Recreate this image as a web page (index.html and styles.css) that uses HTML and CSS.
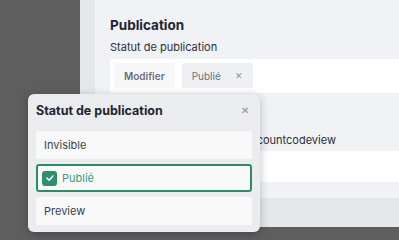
FILE: index.html
```html
<!DOCTYPE html>
<html lang="fr">
<head>
    <meta charset="UTF-8">
    <title>Publication</title>
    <link rel="stylesheet" href="styles.css">
</head>
<body>
    <div class="screen">
        <div class="panel">
            <div class="content">
                <h2 class="section-title">Publication</h2>
                <div class="field-label">Statut de publication</div>
                <div class="field-box">
                    <span class="chip chip-action">Modifier</span>
                    <span class="chip chip-value">Publié <span class="chip-x">&#x2715;</span></span>
                </div>
                <div class="field-label second">Identifiant du compte API accountcodeview</div>
                <div class="field-box input"></div>
            </div>
        </div>

        <div class="popover">
            <div class="popover-header">
                <span>Statut de publication</span>
                <span class="close">&#x2715;</span>
            </div>
            <div class="options">
                <div class="option">Invisible</div>
                <div class="option selected">
                    <span class="check">
                        <svg width="10" height="10" viewBox="0 0 10 10"><path d="M2 5.2 L4.1 7.2 L8 3" fill="none" stroke="#fff" stroke-width="1.6" stroke-linecap="round" stroke-linejoin="round"/></svg>
                    </span>
                    Publié
                </div>
                <div class="option">Preview</div>
            </div>
        </div>
    </div>
</body>
</html>
```

FILE: styles.css
```css
body {
    margin: 0;
    font-family: 'Inter', 'Noto Sans', sans-serif;
    background: #5e5e5e;
}
.screen {
    position: relative;
    width: 399px;
    height: 240px;
    overflow: hidden;
}
.panel {
    margin-left: 80px;
    height: 227px;
    background: #e6e7ea;
    padding-left: 15px;
}
.content {
    background: #f1f2f5;
    height: 181px;
    padding: 17px 0 0 15px;
}
.section-title {
    margin: 0;
    font-size: 13.5px;
    font-weight: 700;
    color: #1f2433;
    line-height: 16px;
}
.field-label {
    margin-top: 7px;
    font-size: 11px;
    color: #2b2f3b;
    line-height: 14px;
}
.field-label.second {
    margin-top: 40px;
}
.field-box {
    margin-top: 5px;
    background: #fff;
    height: 34px;
    padding: 4px;
    box-sizing: border-box;
    display: flex;
    gap: 7px;
}
.field-box.input {
    height: 31px;
    margin-top: 4px;
}
.chip {
    display: flex;
    align-items: center;
    height: 25px;
    padding: 0 10px;
    border-radius: 2px;
    font-size: 10px;
    color: #6b7080;
}
.chip-action {
    background: #f7f7f9;
    font-weight: 600;
}
.chip-value {
    background: #eef0f3;
    gap: 14px;
}
.chip-x {
    font-size: 9px;
    color: #8a8e99;
}
.popover {
    position: absolute;
    left: 28px;
    top: 94px;
    width: 232px;
    height: 138px;
    box-sizing: border-box;
    background: #ebecef;
    border-radius: 6px;
    box-shadow: 0 2px 10px rgba(0, 0, 0, 0.25);
    padding: 0 8px;
}
.popover-header {
    display: flex;
    justify-content: space-between;
    align-items: center;
    height: 30px;
    margin-top: 1px;
    font-size: 12.5px;
    font-weight: 700;
    color: #1f2433;
}
.close {
    font-size: 10px;
    font-weight: 400;
    color: #8a8e99;
    margin-right: 3px;
}
.options {
    margin-top: 6px;
    display: flex;
    flex-direction: column;
    gap: 5px;
}
.option {
    height: 28px;
    box-sizing: border-box;
    display: flex;
    align-items: center;
    padding: 0 8px;
    background: #f9f9fa;
    border-radius: 3px;
    font-size: 11px;
    color: #3a3f4c;
}
.option.selected {
    border: 2px solid #2f8a68;
    padding: 0 4px;
    gap: 5px;
    color: #3a9a74;
}
.check {
    width: 15px;
    height: 15px;
    border-radius: 3px;
    background: #2f8f6c;
    display: flex;
    align-items: center;
    justify-content: center;
}
```
